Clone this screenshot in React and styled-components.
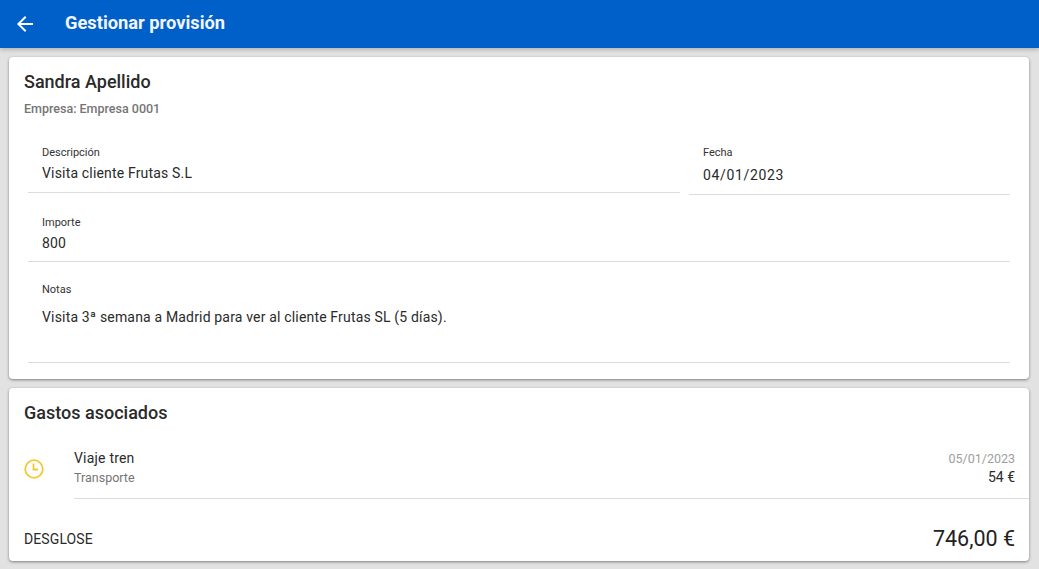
import React from "react";
import styled, { createGlobalStyle } from "styled-components";

const GlobalStyle = createGlobalStyle`
  html, body {
    margin: 0;
    height: 100%;
    overflow: hidden;
    background: #e2e2e2;
    font-family: Roboto, "Liberation Sans", sans-serif;
    color: #212121;
  }
`;

const App = () => {
  return (
    <>
      <GlobalStyle />
      <Toolbar>
        <BackIcon viewBox="0 0 24 24">
          <path d="M20 11H7.83l5.59-5.59L12 4l-8 8 8 8 1.41-1.41L7.83 13H20v-2z" />
        </BackIcon>
        <ToolbarTitle>Gestionar provisión</ToolbarTitle>
      </Toolbar>
      <Content>
        <Card $height={322}>
          <CardTitle>Sandra Apellido</CardTitle>
          <Company>Empresa: Empresa 0001</Company>
          <Form>
            <FieldRow>
              <Field $width={652} $height={62} $top={16} $gap={4}>
                <Label>Descripción</Label>
                <Value>Visita cliente Frutas S.L</Value>
              </Field>
              <Field $width={321} $height={64} $top={16} $gap={6}>
                <Label>Fecha</Label>
                <Value $spaced>04/01/2023</Value>
              </Field>
            </FieldRow>
            <Field $height={67} $top={22} $gap={4}>
              <Label>Importe</Label>
              <Value>800</Value>
            </Field>
            <Field $height={101} $top={22} $gap={11}>
              <Label>Notas</Label>
              <Value>Visita 3ª semana a Madrid para ver al cliente Frutas SL (5 días).</Value>
            </Field>
          </Form>
        </Card>
        <Card $height={173}>
          <CardTitle>Gastos asociados</CardTitle>
          <ExpenseRow>
            <ClockIcon viewBox="0 0 24 24">
              <circle cx="12" cy="12" r="8.8" />
              <path d="M11.5 6.5v6h4.5" />
            </ClockIcon>
            <ExpenseBody>
              <ExpenseLine>
                <ExpenseName>Viaje tren</ExpenseName>
                <ExpenseDate>05/01/2023</ExpenseDate>
              </ExpenseLine>
              <ExpenseLine>
                <ExpenseType>Transporte</ExpenseType>
                <ExpenseAmount>54 €</ExpenseAmount>
              </ExpenseLine>
            </ExpenseBody>
          </ExpenseRow>
          <Breakdown>
            <BreakdownLabel>DESGLOSE</BreakdownLabel>
            <BreakdownTotal>746,00 €</BreakdownTotal>
          </Breakdown>
        </Card>
      </Content>
    </>
  );
};

const Toolbar = styled.header`
  height: 48px;
  background-color: #0060c9;
  display: flex;
  align-items: center;
  padding-left: 13px;
  box-shadow: 0 2px 4px rgba(0, 0, 0, 0.2);
`;

const BackIcon = styled.svg`
  width: 24px;
  height: 24px;
  fill: #fff;
`;

const ToolbarTitle = styled.h1`
  margin: 0 0 4px 28px;
  font-size: 18.3px;
  font-weight: 700;
  color: #f2f6fb;
`;

const Content = styled.main`
  display: flex;
  flex-direction: column;
  gap: 9px;
  padding: 9px 10px 0 9px;
`;

const Card = styled.section`
  height: ${(p) => p.$height}px;
  box-sizing: border-box;
  background-color: #fff;
  border-radius: 4px;
  padding-top: 14px;
  box-shadow: 0 1px 3px rgba(0, 0, 0, 0.45);
  display: flex;
  flex-direction: column;
`;

const CardTitle = styled.h2`
  margin: 0 0 0 15px;
  font-size: 18px;
  line-height: 22px;
  font-weight: 500;
  color: #2a2a2a;
`;

const Company = styled.div`
  margin: 9px 0 0 15px;
  font-size: 12.5px;
  line-height: 14px;
  font-weight: 500;
  color: #757575;
`;

const Form = styled.div`
  margin: 15px 19px 0;
  display: flex;
  flex-direction: column;
`;

const FieldRow = styled.div`
  display: flex;
  align-items: flex-start;
  gap: 9px;
  height: 64px;
`;

const Field = styled.div`
  flex: none;
  width: ${(p) => (p.$width ? `${p.$width}px` : "auto")};
  height: ${(p) => p.$height}px;
  box-sizing: border-box;
  border-bottom: 1px solid #dcdcdc;
  padding: ${(p) => p.$top}px 14px 0;
  display: flex;
  flex-direction: column;
  gap: ${(p) => p.$gap}px;
`;

const Label = styled.label`
  font-size: 11px;
  line-height: 12px;
  color: #333;
`;

const Value = styled.div`
  font-size: 14px;
  line-height: 20px;
  color: #2a2a2a;
  letter-spacing: ${(p) => (p.$spaced ? "0.65px" : "0.17px")};
`;

const ExpenseRow = styled.div`
  margin-top: 26px;
  padding-left: 13px;
  display: flex;
  align-items: center;
`;

const ClockIcon = styled.svg`
  width: 24px;
  height: 24px;
  flex: none;
  margin-top: -11px;
  fill: none;
  stroke: #f2c935;
  stroke-width: 1.8;
`;

const ExpenseBody = styled.div`
  flex: 1;
  margin-left: 28px;
  padding: 0 14px 12px 0;
  border-bottom: 1px solid #dcdcdc;
  display: flex;
  flex-direction: column;
  gap: 3px;
`;

const ExpenseLine = styled.div`
  display: flex;
  justify-content: space-between;
  align-items: center;
  height: 16px;
  &:last-child {
    margin-bottom: 1px;
  }
`;

const ExpenseName = styled.span`
  font-size: 14px;
  color: #2a2a2a;
  letter-spacing: 0.2px;
`;

const ExpenseDate = styled.span`
  font-size: 12.5px;
  color: #9e9e9e;
`;

const ExpenseType = styled.span`
  font-size: 12.5px;
  color: #757575;
`;

const ExpenseAmount = styled.span`
  font-size: 14px;
  color: #2a2a2a;
`;

const Breakdown = styled.div`
  margin-top: 27px;
  padding: 0 14px 0 15px;
  display: flex;
  justify-content: space-between;
  align-items: center;
`;

const BreakdownLabel = styled.span`
  font-size: 14px;
  letter-spacing: 0.1px;
  color: #2a2a2a;
`;

const BreakdownTotal = styled.span`
  font-size: 21.5px;
  line-height: 26px;
  color: #222;
`;

export default App;
